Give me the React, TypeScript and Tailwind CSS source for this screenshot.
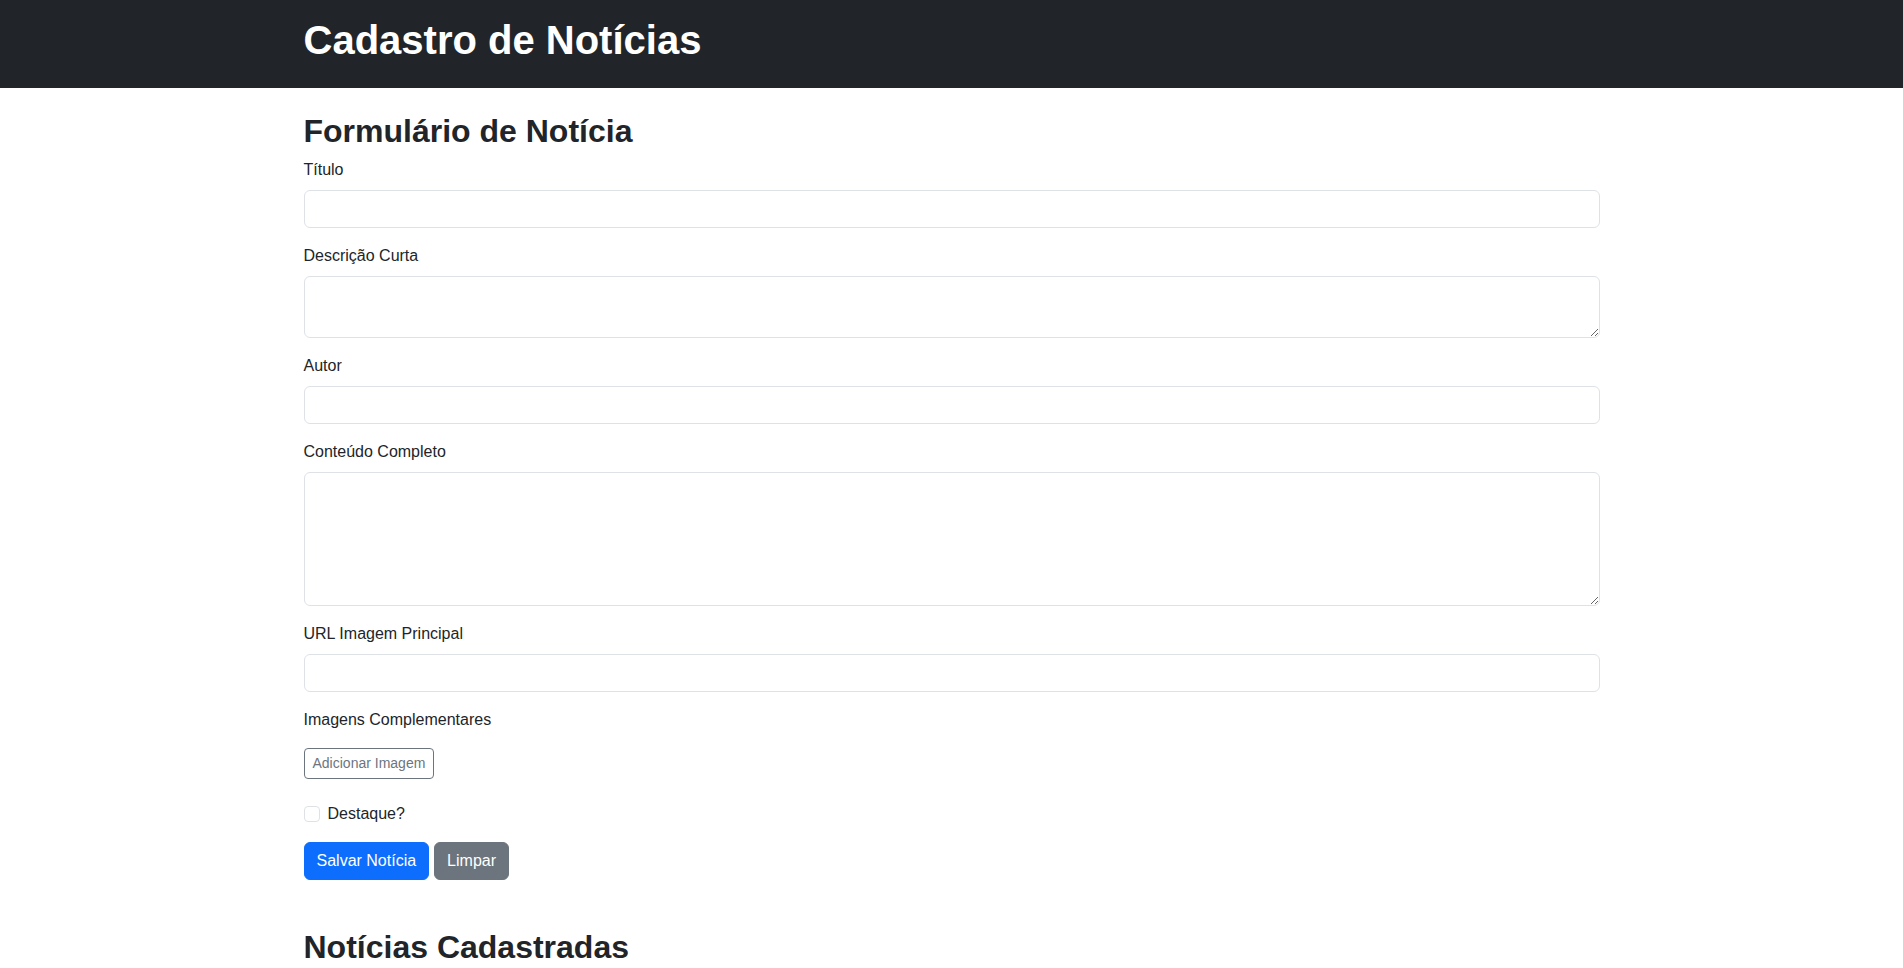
import React from 'react';

const inputCls =
  "block w-full h-[38px] px-3 py-1.5 text-base leading-6 text-[#212529] bg-white border border-[#dee2e6] rounded-[6px] outline-none focus:border-[#86b7fe]";

const Field: React.FC<{ label: string; children: React.ReactNode }> = ({ label, children }) => (
  <div className="mb-4">
    <label className="block mb-2 text-base leading-6">{label}</label>
    {children}
  </div>
);

export default function App() {
  return (
    <div className="min-h-screen bg-white text-[#212529] font-['Liberation_Sans',Arial,sans-serif]">
      <header className="bg-[#212529] text-white py-4">
        <div className="mx-auto w-full max-w-[1320px] px-3">
          <h1 className="text-[40px] leading-[1.2] font-bold mb-2">Cadastro de Notícias</h1>
        </div>
      </header>

      <main className="mx-auto w-full max-w-[1320px] px-3 mt-6">
        <h2 className="text-[32px] leading-[1.2] font-bold mb-2">Formulário de Notícia</h2>

        <form className="mb-12" onSubmit={(e) => e.preventDefault()}>
          <Field label="Título">
            <input type="text" className={inputCls} />
          </Field>
          <Field label="Descrição Curta">
            <textarea
              rows={2}
              className="block w-full h-[62px] px-3 py-1.5 text-base leading-6 bg-white border border-[#dee2e6] rounded-[6px] outline-none resize-y"
            />
          </Field>
          <Field label="Autor">
            <input type="text" className={inputCls} />
          </Field>
          <Field label="Conteúdo Completo">
            <textarea
              rows={5}
              className="block w-full h-[134px] px-3 py-1.5 text-base leading-6 bg-white border border-[#dee2e6] rounded-[6px] outline-none resize-y"
            />
          </Field>
          <Field label="URL Imagem Principal">
            <input type="text" className={inputCls} />
          </Field>

          <div className="mb-4">
            <label className="block mb-2 text-base leading-6">Imagens Complementares</label>
            {/* lista de imagens (vazia) */}
            <div className="h-2" />
            <button
              type="button"
              className="h-[31px] px-2 text-sm leading-[1.5] text-[#6c757d] bg-white border border-[#6c757d] rounded-[4px]"
            >
              Adicionar Imagem
            </button>
          </div>

          <div className="mb-4 flex items-start min-h-6 pt-[7px]">
            <input
              type="checkbox"
              className="appearance-none mt-1 w-4 h-4 border border-[#dee2e6] rounded-[4px] bg-white shrink-0"
            />
            <label className="ml-2 text-base leading-6">Destaque?</label>
          </div>

          <div className="flex gap-[5px]">
            <button
              type="submit"
              className="h-[38px] px-3 text-base leading-6 text-white bg-[#0d6efd] border border-[#0d6efd] rounded-[6px]"
            >
              Salvar Notícia
            </button>
            <button
              type="reset"
              className="h-[38px] px-3 text-base leading-6 text-white bg-[#6c757d] border border-[#6c757d] rounded-[6px]"
            >
              Limpar
            </button>
          </div>
        </form>

        <h2 className="text-[32px] leading-[1.2] font-bold">Notícias Cadastradas</h2>
        <div />
      </main>
    </div>
  );
}
